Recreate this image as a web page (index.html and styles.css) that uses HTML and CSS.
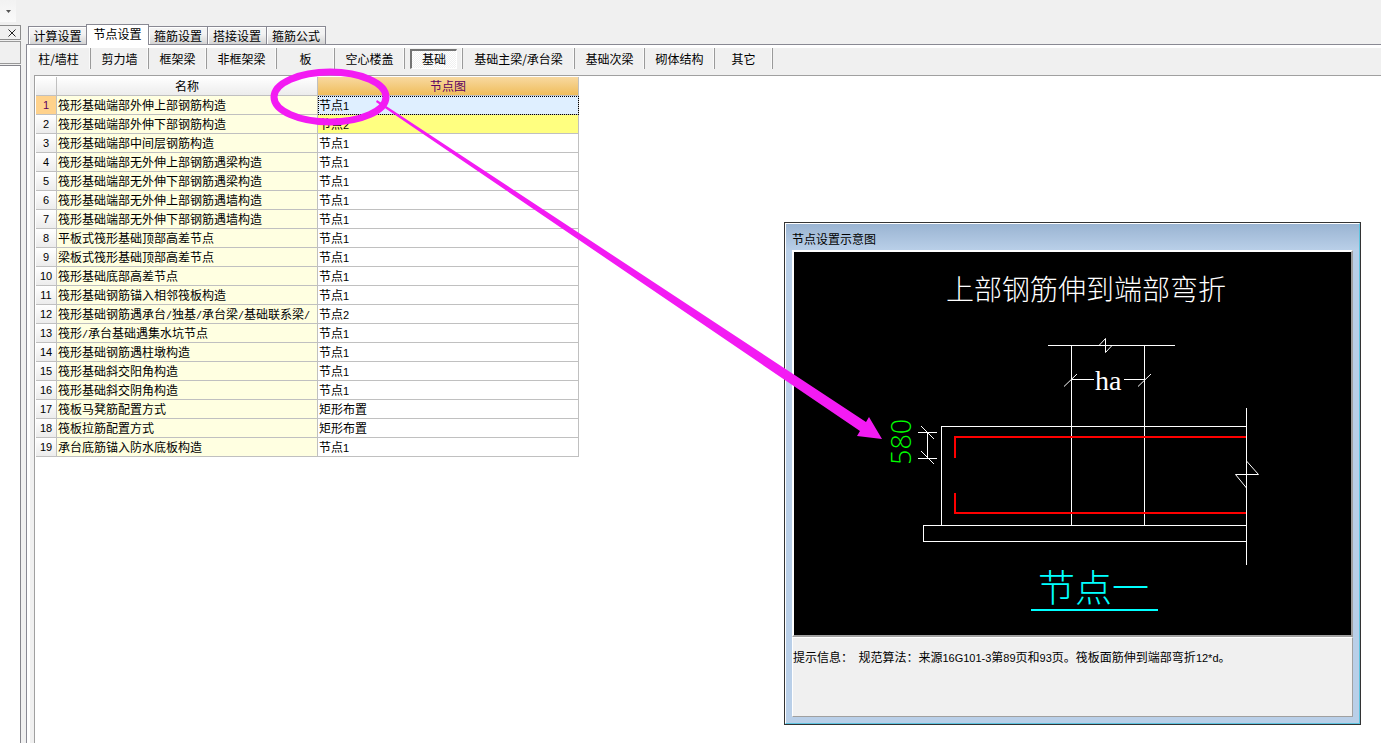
FILE: index.html
```html
<!DOCTYPE html>
<html lang="zh-CN">
<head>
<meta charset="utf-8">
<title>节点设置</title>
<link rel="stylesheet" href="styles.css">
</head>
<body>
<div class="toolbar"><button class="toolbar-more" aria-label="更多"><svg width="5" height="3" viewBox="0 0 5 3"><path d="M0 0h5L2.500 3z" fill="#555"/></svg></button></div>
<main class="workspace">
  <aside class="dock">
    <div class="dock-title"><button class="dock-close" aria-label="关闭"><svg width="8" height="8" viewBox="0 0 8 8"><path d="M.5 .5l7 7M7.500 .5l-7 7" stroke="#222" fill="none"/></svg></button></div>
    <div class="dock-head"></div>
    <div class="dock-body"></div>
  </aside>
  <section class="settings">
    <nav class="tabs">
      <button class="tab tab-first">计算设置</button>
      <button class="tab tab-active">节点设置</button>
      <button class="tab">箍筋设置</button>
      <button class="tab">搭接设置</button>
      <button class="tab">箍筋公式</button>
    </nav>
    <div class="panel">
      <div class="panel-inner">
        <nav class="kinds">
          <button class="kind kind-first">柱/墙柱</button>
          <button class="kind w58">剪力墙</button>
          <button class="kind w58">框架梁</button>
          <button class="kind w70">非框架梁</button>
          <button class="kind w58">板</button>
          <button class="kind w70">空心楼盖</button>
          <button class="kind w58"><span class="pressed">基础</span></button>
          <button class="kind w112">基础主梁/承台梁</button>
          <button class="kind w70">基础次梁</button>
          <button class="kind w70">砌体结构</button>
          <button class="kind w58">其它</button>
        </nav>
        <div class="grid-area">
          <table class="grid">
            <colgroup><col class="col-num"><col class="col-wide"><col class="col-wide"></colgroup>
            <thead><tr><th></th><th>名称</th><th class="head-active">节点图</th></tr></thead>
            <tbody>
              <tr class="current"><th>1</th><td>筏形基础端部外伸上部钢筋构造</td><td>节点<span class="latin">1</span></td></tr>
              <tr class="changed"><th>2</th><td>筏形基础端部外伸下部钢筋构造</td><td>节点<span class="latin">2</span></td></tr>
              <tr><th>3</th><td>筏形基础端部中间层钢筋构造</td><td>节点<span class="latin">1</span></td></tr>
              <tr><th>4</th><td>筏形基础端部无外伸上部钢筋遇梁构造</td><td>节点<span class="latin">1</span></td></tr>
              <tr><th>5</th><td>筏形基础端部无外伸下部钢筋遇梁构造</td><td>节点<span class="latin">1</span></td></tr>
              <tr><th>6</th><td>筏形基础端部无外伸上部钢筋遇墙构造</td><td>节点<span class="latin">1</span></td></tr>
              <tr><th>7</th><td>筏形基础端部无外伸下部钢筋遇墙构造</td><td>节点<span class="latin">1</span></td></tr>
              <tr><th>8</th><td>平板式筏形基础顶部高差节点</td><td>节点<span class="latin">1</span></td></tr>
              <tr><th>9</th><td>梁板式筏形基础顶部高差节点</td><td>节点<span class="latin">1</span></td></tr>
              <tr><th>10</th><td>筏形基础底部高差节点</td><td>节点<span class="latin">1</span></td></tr>
              <tr><th>11</th><td>筏形基础钢筋锚入相邻筏板构造</td><td>节点<span class="latin">1</span></td></tr>
              <tr><th>12</th><td>筏形基础钢筋遇承台<span class="slash">/</span>独基<span class="slash">/</span>承台梁<span class="slash">/</span>基础联系梁<span class="slash">/</span></td><td>节点<span class="latin">2</span></td></tr>
              <tr><th>13</th><td>筏形<span class="slash">/</span>承台基础遇集水坑节点</td><td>节点<span class="latin">1</span></td></tr>
              <tr><th>14</th><td>筏形基础钢筋遇柱墩构造</td><td>节点<span class="latin">1</span></td></tr>
              <tr><th>15</th><td>筏形基础斜交阳角构造</td><td>节点<span class="latin">1</span></td></tr>
              <tr><th>16</th><td>筏形基础斜交阴角构造</td><td>节点<span class="latin">1</span></td></tr>
              <tr><th>17</th><td>筏板马凳筋配置方式</td><td>矩形布置</td></tr>
              <tr><th>18</th><td>筏板拉筋配置方式</td><td>矩形布置</td></tr>
              <tr><th>19</th><td>承台底筋锚入防水底板构造</td><td>节点<span class="latin">1</span></td></tr>
            </tbody>
          </table>
        </div>
      </div>
    </div>
  </section>
</main>

<section class="dialog">
  <div class="dialog-frame">
    <h2 class="dialog-title">节点设置示意图</h2>
    <div class="drawing">
      <svg class="drawing-svg" viewBox="794 252 557 383">
        <g fill="none" stroke="#fff" shape-rendering="crispEdges">
          <path d="M1048 345.500H1175M1071.500 345V525M1144.500 345V525"/>
          <path d="M1072 379.500H1094M1124 379.500H1144"/>
          <path d="M1246 426.500H941.500V525M923.500 525.500H1246M923.500 525V541.500H1246M1246.500 408V565"/>
          <path d="M918 432.500H937M918 458.500H937M927.500 432V459"/>
        </g>
        <g fill="none" stroke="#fff">
          <path d="M1099 345.500L1105.500 338.500V352.500L1112 345.500"/>
          <path d="M1064 386.500L1077 374M1138 386.500L1151 374"/>
          <path d="M921 426L934 439M921 451L934 464"/>
          <path d="M1246.500 461L1258.500 474.500H1235.500L1246.500 488"/>
        </g>
        <g fill="none" stroke="#f00" stroke-width="2" shape-rendering="crispEdges">
          <path d="M1246 437H955V458M955 493V513H1246"/>
        </g>
        <path d="M1031 610H1158" stroke="#0ff" stroke-width="2"/>
        <text class="cad-title" x="946" y="300">上部钢筋伸到端部弯折</text>
        <text class="cad-ha" x="1095" y="390">ha</text>
        <text class="cad-size" transform="translate(911 465) rotate(-90)">580</text>
        <text class="cad-name" x="1038" y="602">节点一</text>
      </svg>
    </div>
    <p class="hint">提示信息：&nbsp; 规范算法：来源<span class="latin">16G101-3</span>第<span class="latin">89</span>页和<span class="latin">93</span>页。筏板面筋伸到端部弯折<span class="latin">12*d</span>。</p>
  </div>
</section>

<svg class="annotation" width="900" height="450" viewBox="0 0 900 450" aria-hidden="true">
  <ellipse cx="330" cy="97" rx="56" ry="25" fill="none" stroke="#f31bf3" stroke-width="7"/>
  <path d="M377 100L866 422L869 417L882 439L857 436L860 431L376 102Z" fill="#f31bf3"/>
</svg>
</body>
</html>
```
FILE: styles.css
```css
* { box-sizing: border-box; }

body {
  margin: 0;
  min-height: 100vh;
  display: flex;
  flex-direction: column;
  position: relative;
  background: #f0f0f0;
  color: #000;
  font-family: "Noto Sans CJK SC", sans-serif;
  font-size: 12px;
  line-height: 18px;
}

button {
  margin: 0;
  padding: 0;
  border: 0;
  background: none;
  color: inherit;
  font: inherit;
  white-space: nowrap;
}

svg { display: block; }

/* Half-width digits and slashes next to Chinese text */
.latin { font-family: "Liberation Sans", sans-serif; font-size: 11px; line-height: 1; }
.slash { font-family: "Liberation Mono", monospace; font-size: 10px; line-height: 1; }

.toolbar { height: 24px; }

.toolbar-more {
  width: 16px;
  height: 22px;
  padding-left: 6px;
  background: linear-gradient(#f2f2f2, #fafafa);
}

.workspace {
  flex: 1;
  display: flex;
  gap: 5px;
}

/* Docked side pane */
.dock {
  width: 21px;
  display: flex;
  flex-direction: column;
  padding-top: 1px;
}

.dock-title {
  height: 15px;
  margin-bottom: 1px;
  display: flex;
  justify-content: flex-end;
  align-items: center;
  padding-right: 4px;
  border: 1px solid #8b8b8b;
  border-left: 0;
  border-radius: 0 1px 1px 0;
}

.dock-head {
  height: 23px;
  border: 1px solid #999;
  border-left: 0;
}

.dock-body {
  flex: 1;
  margin-top: 1px;
  background: #fff;
  border: 1px solid #85858c;
  border-left: 0;
  border-bottom: 0;
}

/* Tabs */
.settings {
  flex: 1;
  min-width: 0;
  display: flex;
  flex-direction: column;
}

.tabs {
  display: flex;
  align-items: flex-end;
  height: 20px;
  padding-left: 2px;
}

.tab {
  width: 59px;
  height: 18px;
  border: 1px solid #898993;
  border-left-width: 0;
  border-bottom: 0;
  background: linear-gradient(#f3f3f3 40%, #d4d4d4);
  box-shadow: inset 1px 1px #fff;
}

.tab-first { width: 58px; border-left-width: 1px; border-right: 0; }

.tab-active {
  z-index: 1;
  width: 63px;
  height: 21px;
  margin-bottom: -1px;
  padding-bottom: 2px;
  border-left-width: 1px;
  background: #fff;
}

.panel {
  flex: 1;
  display: flex;
  padding: 3px 0 0 3px;
  border: 1px solid #898993;
  border-right: 0;
  border-bottom: 0;
  background: #fff;
}

.panel-inner {
  flex: 1;
  min-width: 0;
  display: flex;
  flex-direction: column;
  background: #f0f0f0;
}

.kinds {
  display: flex;
  height: 27px;
}

.kind {
  height: 21px;
  border-right: 1px solid #9a9a9a;
  box-shadow: inset -1px 0 #fafafa;
}

.kind-first { width: 61px; padding-right: 3px; }
.w58 { width: 58px; }
.w70 { width: 70px; }
.w112 { width: 112px; }

.pressed {
  display: block;
  height: 20px;
  margin: 0 5px;
  border: 1px solid #fff;
  border-top: 2px solid #747474;
  border-left: 2px solid #747474;
  background: repeating-conic-gradient(#fff 0 25%, #f0f0f0 0 50%) 0 0 / 2px 2px;
  line-height: 16px;
}

.grid-area {
  flex: 1;
  margin-left: 4px;
  padding: 1px 0 0 1px;
  border: 1px solid #a0a0a0;
  border-right: 0;
  border-bottom: 0;
  background: #fff;
}

/* Node table */
.grid {
  width: 543px;
  table-layout: fixed;
  border-collapse: separate;
  border-spacing: 0;
}

.col-num { width: 21px; }
.col-wide { width: 261px; }

.grid th,
.grid td {
  height: 19px;
  padding: 0 1px;
  overflow: hidden;
  border-right: 1px solid #c0c0c0;
  border-bottom: 1px solid #c0c0c0;
  font-weight: 400;
  line-height: 18px;
  white-space: nowrap;
}

.grid th {
  padding: 0;
  background: linear-gradient(#fff, #ececec);
  text-align: center;
}

.grid tbody th { font-family: "Liberation Sans", sans-serif; font-size: 11px; }

.grid td:nth-child(2) { background: #ffffe1; }

.grid .head-active {
  background: linear-gradient(#f8d9a0, #f0bd5c);
  color: #5c0060;
}

.grid .current th { background: #ffd28c; color: #5c0060; }
.grid .current td:last-child {
  background: #dfefff;
  outline: 1px dotted #000;
  outline-offset: -1px;
}
.changed td:last-child { background: #ffff80; }

/* Floating preview window */
.dialog {
  position: absolute;
  left: 784px;
  top: 222px;
  width: 577px;
  border: 1px solid #333;
}

.dialog-frame {
  padding: 0 6px 6px;
  border: 1px solid #fff;
  border-right-color: #5ec4e0;
  border-bottom-color: #5ec4e0;
  background: linear-gradient(#9ab4d2, #b9cfe8 26px);
}

.dialog-title {
  margin: 0;
  padding-top: 6px;
  height: 26px;
  font-size: 12px;
  font-weight: 400;
  line-height: 18px;
}

.drawing {
  border: 2px solid #fff;
  border-right-color: #a0a0a0;
  border-bottom-color: #a0a0a0;
  background: #000;
}

.drawing-svg { width: 100%; }

.cad-title { fill: #fff; font-size: 28px; font-weight: 300; }
.cad-ha { fill: #fff; font-family: "Liberation Serif", serif; font-size: 28px; }
.cad-size { fill: #0f0; font-family: "Open Sans", sans-serif; font-size: 27px; font-weight: 300; }
.cad-name { fill: #0ff; font-size: 37px; font-weight: 300; }

.hint {
  margin: 0;
  min-height: 80px;
  padding: 10px 0 0;
  border: 1px solid #fff;
  border-right-color: #a0a0a0;
  border-bottom-color: #a0a0a0;
  background: #f0f0f0;
}

.annotation {
  position: absolute;
  left: 0;
  top: 0;
  pointer-events: none;
}
```
